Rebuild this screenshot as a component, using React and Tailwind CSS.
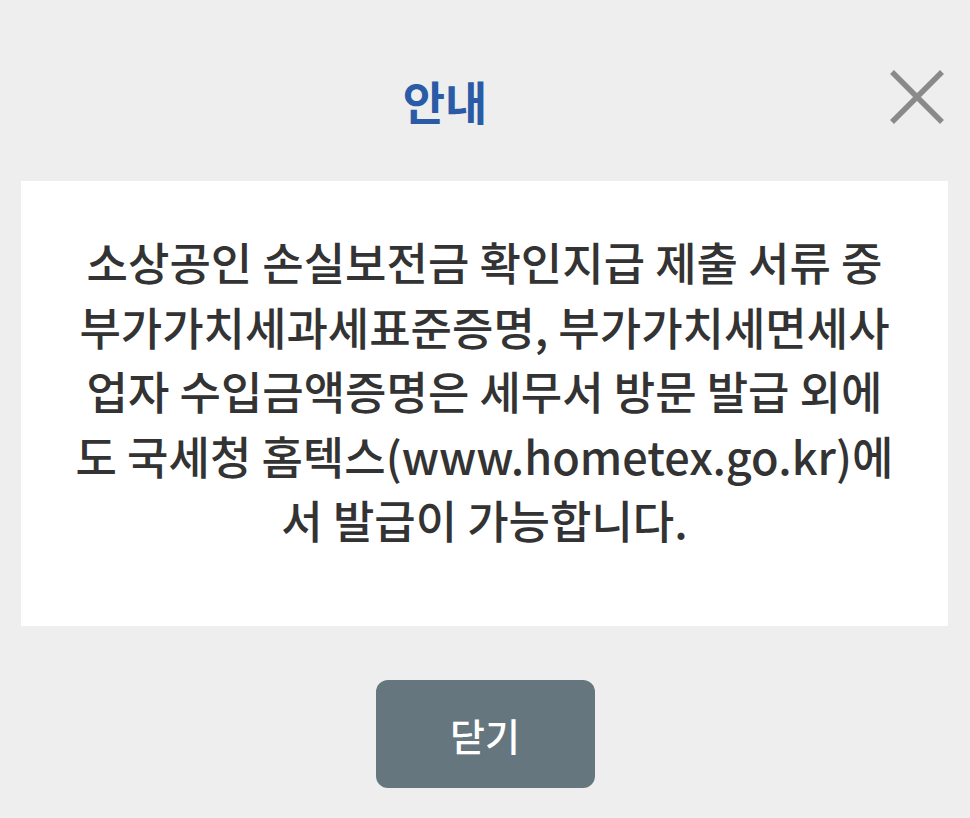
import { useState } from "react";

const lines = [
  "소상공인 손실보전금 확인지급 제출 서류 중",
  "부가가치세과세표준증명, 부가가치세면세사",
  "업자 수입금액증명은 세무서 방문 발급 외에",
  "도 국세청 홈텍스(www.hometex.go.kr)에",
  "서 발급이 가능합니다.",
];

function CloseIcon() {
  return (
    <svg width="54" height="54" viewBox="0 0 54 54" fill="none">
      <path d="M2 2L52 52M52 2L2 52" stroke="#8a8a8a" strokeWidth="5.5" />
    </svg>
  );
}

export default function App() {
  const [open, setOpen] = useState(true);

  return (
    <div
      className="flex min-h-[818px] w-full flex-col bg-[#eeeeee]"
      style={{ fontFamily: '"Noto Sans CJK KR", "Noto Sans", sans-serif' }}
    >
      <header className="flex h-[181px] items-start">
        <h1 className="flex-1 pt-[68px] text-center text-[46px] leading-[64px] font-bold text-[#2a5ba6]">안내</h1>
        <button type="button" className="flex w-[80px] items-center pt-[70px] pr-[26px]" onClick={() => setOpen(!open)}>
          <CloseIcon />
        </button>
      </header>

      <section className="mr-[22px] ml-[21px] flex h-[445px] flex-col items-center justify-center bg-white pb-[24px]">
        {lines.map((line) => (
          <p key={line} className="text-center text-[45px] leading-[64.5px] font-medium text-[#333333]">
            {line}
          </p>
        ))}
      </section>

      <div className="flex justify-center pt-[54px]">
        <button
          type="button"
          className="flex h-[108px] w-[219px] items-center justify-center rounded-[12px] bg-[#66767f] text-[38px] font-medium text-white"
        >
          닫기
        </button>
      </div>
    </div>
  );
}
